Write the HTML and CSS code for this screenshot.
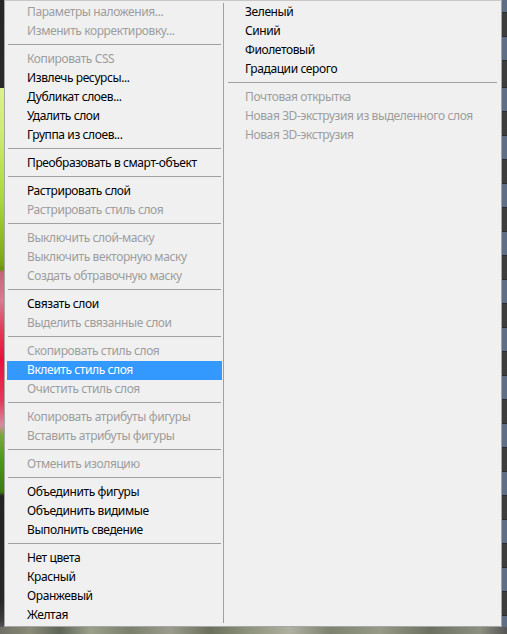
FILE: index.html
```html
<!DOCTYPE html>
<html lang="ru">
<head>
<meta charset="utf-8">
<title>Меню слоя</title>
<link rel="stylesheet" href="styles.css">
</head>
<body>
<div class="screen">
  <div class="main-row">
    <div class="photo-left"></div>
    <div class="menu">
      <ul class="col col-left">
        <li class="item off">Параметры наложения...</li>
        <li class="item off">Изменить корректировку...</li>
        <li class="sep"></li>
        <li class="item off">Копировать CSS</li>
        <li class="item">Извлечь ресурсы...</li>
        <li class="item">Дубликат слоев...</li>
        <li class="item">Удалить слои</li>
        <li class="item">Группа из слоев...</li>
        <li class="sep"></li>
        <li class="item">Преобразовать в смарт-объект</li>
        <li class="sep"></li>
        <li class="item">Растрировать слой</li>
        <li class="item off">Растрировать стиль слоя</li>
        <li class="sep"></li>
        <li class="item off">Выключить слой-маску</li>
        <li class="item off">Выключить векторную маску</li>
        <li class="item off">Создать обтравочную маску</li>
        <li class="sep"></li>
        <li class="item">Связать слои</li>
        <li class="item off">Выделить связанные слои</li>
        <li class="sep"></li>
        <li class="item off">Скопировать стиль слоя</li>
        <li class="item active">Вклеить стиль слоя</li>
        <li class="item off">Очистить стиль слоя</li>
        <li class="sep"></li>
        <li class="item off">Копировать атрибуты фигуры</li>
        <li class="item off">Вставить атрибуты фигуры</li>
        <li class="sep"></li>
        <li class="item off">Отменить изоляцию</li>
        <li class="sep"></li>
        <li class="item">Объединить фигуры</li>
        <li class="item">Объединить видимые</li>
        <li class="item">Выполнить сведение</li>
        <li class="sep"></li>
        <li class="item">Нет цвета</li>
        <li class="item">Красный</li>
        <li class="item">Оранжевый</li>
        <li class="item">Желтая</li>
      </ul>
      <div class="vdiv"></div>
      <ul class="col col-right">
        <li class="item">Зеленый</li>
        <li class="item">Синий</li>
        <li class="item">Фиолетовый</li>
        <li class="item">Градации серого</li>
        <li class="sep"></li>
        <li class="item off">Почтовая открытка</li>
        <li class="item off">Новая 3D-экструзия из выделенного слоя</li>
        <li class="item off">Новая 3D-экструзия</li>
      </ul>
    </div>
    <div class="panel-right"></div>
  </div>
  <div class="photo-bottom"></div>
</div>
</body>
</html>
```

FILE: styles.css
```css
* {
  box-sizing: border-box;
}

html, body {
  margin: 0;
  padding: 0;
  width: 507px;
  height: 634px;
  overflow: hidden;
  background: #2b2b2b;
}

.screen {
  width: 507px;
  height: 634px;
  display: flex;
  flex-direction: column;
}

.main-row {
  display: flex;
  height: 627px;
}

.photo-left {
  width: 4px;
  flex: none;
  background: linear-gradient(to bottom,
    #262626 0px, #2a2a2a 88px,
    #dcf28a 88px, #cfec74 130px, #a8d83a 200px, #7fa81a 260px, #6e9012 270px,
    #c8607a 272px, #d97b92 300px, #e23a5a 330px, #ea0f3a 360px, #e3385a 400px, #d88aa0 425px,
    #7aa83a 435px, #4a9a18 460px, #3c7c10 492px,
    #232323 496px, #262626 600px, #3c3c3c 620px, #555 627px);
}

.menu {
  width: 498px;
  flex: none;
  height: 627px;
  background: #f0f0f0;
  border: 1px solid #a6a6a6;
  border-top-color: #c8c8c8;
  padding: 2px;
  display: flex;
  align-items: stretch;
  font-family: "Noto Sans", "Open Sans", sans-serif;
  font-size: 12px;
  letter-spacing: -0.4px;
  color: #000;
}

.col {
  list-style: none;
  margin: 0;
  padding: 0;
}

.col-left {
  width: 215px;
  flex: none;
}

.vdiv {
  width: 1px;
  flex: none;
  margin: 0 0 1px 1px;
  background: #a0a0a0;
}

.col-right {
  margin-left: 1px;
  flex: 1;
}

.item {
  height: 19px;
  line-height: 18px;
  padding-left: 20px;
  white-space: nowrap;
}

.item.off {
  color: #9d9d9d;
}

.item.active {
  background: #3399ff;
  color: #fff;
}

.sep {
  height: 9px;
  padding-top: 3px;
}

.sep::before {
  content: "";
  display: block;
  height: 1px;
  margin: 0 1px;
  background: #a0a0a0;
}

.col-right .sep::before {
  margin: 0 2px 0 3px;
}

.panel-right {
  width: 5px;
  flex: none;
  background:
    repeating-linear-gradient(to bottom,
      #3d3d3d 0px, #3d3d3d 23px, #2c2c2c 23px, #2c2c2c 24px,
      #5d6f87 24px, #5d6f87 47px, #2c2c2c 47px, #2c2c2c 48px);
  background-position: 0 64px;
  background-color: #3a3a3a;
}

.photo-bottom {
  height: 7px;
  background: linear-gradient(to right,
    #6f6f66 0px, #8b8b78 30px, #5f6558 60px, #9aa08a 90px, #7a806c 130px,
    #9c9c8c 170px, #6a705c 210px, #8e947e 250px, #b0b0a0 290px, #7d8370 330px,
    #969a86 380px, #6c7060 430px, #8c9080 480px, #555 507px);
}
```
